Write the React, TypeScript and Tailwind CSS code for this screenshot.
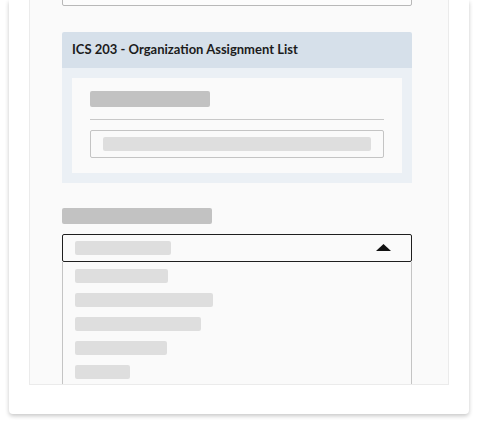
import React from "react";

const Bar = ({ w, tone = "light" }: { w: string; tone?: "light" | "dark" }) => (
    <div
        className={`${w} ${tone === "dark" ? "h-[16px] bg-[#c2c2c2]" : "h-[14px] bg-[#dedede]"} rounded-[2px]`}
    />
);

const App = () => {
    const options = ["w-[93px]", "w-[138px]", "w-[126px]", "w-[92px]", "w-[55px]", "w-[110px]"];

    return (
        <div className="h-[422px] w-[480px] overflow-hidden bg-white font-['Lato',sans-serif]">
            {/* Card */}
            <div className="ml-[9px] w-[460px] rounded-b-[4px] bg-white px-[20px] pb-[29px] shadow-[0_2px_4px_rgba(0,0,0,0.22)]">
                {/* Scrolling panel */}
                <div className="h-[385px] overflow-hidden border-x border-b border-[#ebebeb] bg-[#fafafa] pl-[32px]">
                    <div className="-mt-[22px] w-[350px]">
                        {/* Previous field */}
                        <div className="h-[28px] rounded-[2px] border border-[#b8b8b8] bg-[#fcfcfc]" />

                        {/* ICS 203 section */}
                        <section className="mt-[26px] overflow-hidden rounded-t-[2px]">
                            <header className="flex h-[36px] items-center bg-[#d6e0ea] px-[10px]">
                                <h3 className="text-[13px] font-bold text-[#1c1c1c]">
                                    ICS 203 - Organization Assignment List
                                </h3>
                            </header>
                            <div className="bg-[#ebf0f5] p-[10px]">
                                <div className="bg-[#fafafa] px-[18px] pt-[13px] pb-[15px]">
                                    <Bar w="w-[120px]" tone="dark" />
                                    <hr className="mt-[12px] border-[#c8c8c8]" />
                                    <div className="mt-[10px] flex h-[28px] items-center rounded-[2px] border border-[#c4c4c4] px-[12px]">
                                        <div className="h-[14px] w-full rounded-[2px] bg-[#dedede]" />
                                    </div>
                                </div>
                            </div>
                        </section>

                        {/* Select field */}
                        <div className="mt-[25px]">
                            <Bar w="w-[150px]" tone="dark" />
                            <div className="mt-[10px] flex h-[28px] items-center justify-between rounded-[2px] border border-[#1f1f1f] bg-[#fafafa] pl-[12px] pr-[20px]">
                                <Bar w="w-[96px]" />
                                <svg width="15" height="7" viewBox="0 0 15 7" className="-mt-[2px]">
                                    <polygon points="7.5,0 15,7 0,7" fill="#111" />
                                </svg>
                            </div>
                            {/* Open options list */}
                            <ul className="border-x border-b border-[#c4c4c4] bg-[#fafafa] pt-[2px] pb-[4px]">
                                {options.map((w, i) => (
                                    <li key={i} className="flex h-[24px] items-center px-[12px]">
                                        <Bar w={w} />
                                    </li>
                                ))}
                            </ul>
                        </div>
                    </div>
                </div>
            </div>
        </div>
    );
};

export default App;
